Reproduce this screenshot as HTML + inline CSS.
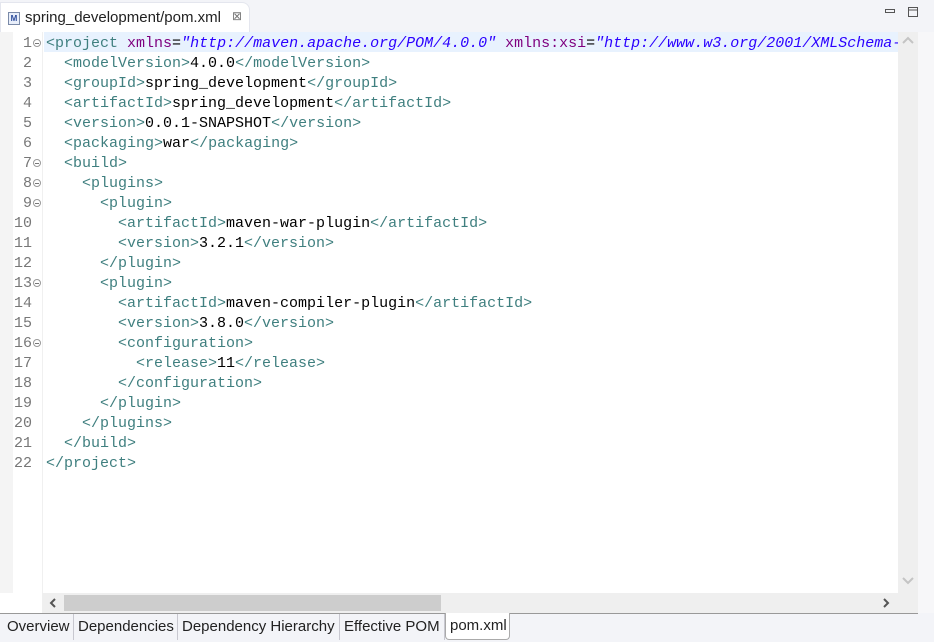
<!DOCTYPE html>
<html><head><meta charset="utf-8"><style>
*{margin:0;padding:0;box-sizing:border-box}
body{width:934px;height:642px;overflow:hidden;background:#f3f4f8;font-family:"Liberation Sans",sans-serif;position:relative}
.tabbar{position:absolute;left:0;top:0;width:934px;height:32px;background:#f3f4f8}
.tab{position:absolute;left:0;top:2px;width:250px;height:30px;background:#fff;border-top-right-radius:8px;border:1px solid #e4e6ee;border-bottom:none}
.tab .t{position:absolute;left:24px;top:6px;font-size:15px;color:#222}
.tab .x{position:absolute;left:231px;top:6px;font-size:12px;color:#777}
.ico{position:absolute;left:7px;top:9px;width:12px;height:13px;border:1px solid #7a8aa8;background:#e8eefa;font-size:8px;font-weight:bold;color:#2a4a9a;text-align:center;line-height:11px}
.editor{position:absolute;left:0;top:32px;width:934px;height:581px;background:#fff}
.lstrip{position:absolute;left:0;top:32px;width:13px;height:561px;background:#f4f4f4}
.ruler{position:absolute;left:42px;top:32px;width:1px;height:561px;background:#f0f0f0}
.hl{position:absolute;left:44px;top:32px;width:854px;height:20px;background:#e8f2fe}
.nums{position:absolute;left:0;top:34px;width:32px;text-align:right;font:15px/20px "Liberation Mono",monospace;color:#777}
.fold{position:absolute;left:33px;width:8px;height:8px;border:1px solid #999;border-radius:50%;font-size:0}
.fold:after{content:"";position:absolute;left:1px;top:2.5px;width:4px;height:1px;background:#777}
.code{position:absolute;left:46px;top:34px;font:15px/20px "Liberation Mono",monospace;white-space:pre;color:#000;width:852px;overflow:hidden}
.t1{color:#3f7f7f}.a{color:#7f007f}.s{color:#2a00ff;font-style:italic}
.vs{position:absolute;left:898px;top:32px;width:20px;height:561px;background:#efefef}
.rg{position:absolute;left:918px;top:32px;width:16px;height:581px;background:#f7f7f9}
.hs{position:absolute;left:42px;top:593px;width:876px;height:20px;background:#efefef}
.thumb{position:absolute;left:64px;top:595px;width:377px;height:16px;background:#cdcdcd}
.bl{position:absolute;left:0;top:613px;width:918px;height:1px;background:#999}
.btabs{position:absolute;left:0;top:614px;height:27px;font-size:15px;color:#222}
.bt{position:absolute;top:0;height:26px;line-height:25px;padding:0 4px;border-right:1px solid #c8c8d0;white-space:nowrap}
</style></head><body>
<div class="tabbar"></div>
<div class="tab"><div class="ico">M</div><span class="t">spring_development/pom.xml</span><span class="x">⊠</span></div>
<svg style="position:absolute;left:884px;top:6px" width="40" height="12"><rect x="1.5" y="3.5" width="9" height="3" fill="none" stroke="#555"/><rect x="24.5" y="1.5" width="9" height="9" fill="none" stroke="#555"/><line x1="24" y1="4" x2="34" y2="4" stroke="#555"/></svg>
<div class="editor"></div>
<div class="lstrip"></div>
<div class="ruler"></div>
<div class="hl"></div>
<div class="nums">1<br>2<br>3<br>4<br>5<br>6<br>7<br>8<br>9<br>10<br>11<br>12<br>13<br>14<br>15<br>16<br>17<br>18<br>19<br>20<br>21<br>22</div>
<div class="fold" style="top:39px"></div><div class="fold" style="top:159px"></div><div class="fold" style="top:179px"></div><div class="fold" style="top:199px"></div><div class="fold" style="top:279px"></div><div class="fold" style="top:339px"></div>
<div class="code"><span class="t1">&lt;project</span> <span class="a">xmlns</span>=<span class="s">"http://maven.apache.org/POM/4.0.0"</span> <span class="a">xmlns:xsi</span>=<span class="s">"http://www.w3.org/2001/XMLSchema-instance"</span>
  <span class="t1">&lt;modelVersion&gt;</span>4.0.0<span class="t1">&lt;/modelVersion&gt;</span>
  <span class="t1">&lt;groupId&gt;</span>spring_development<span class="t1">&lt;/groupId&gt;</span>
  <span class="t1">&lt;artifactId&gt;</span>spring_development<span class="t1">&lt;/artifactId&gt;</span>
  <span class="t1">&lt;version&gt;</span>0.0.1-SNAPSHOT<span class="t1">&lt;/version&gt;</span>
  <span class="t1">&lt;packaging&gt;</span>war<span class="t1">&lt;/packaging&gt;</span>
  <span class="t1">&lt;build&gt;</span>
    <span class="t1">&lt;plugins&gt;</span>
      <span class="t1">&lt;plugin&gt;</span>
        <span class="t1">&lt;artifactId&gt;</span>maven-war-plugin<span class="t1">&lt;/artifactId&gt;</span>
        <span class="t1">&lt;version&gt;</span>3.2.1<span class="t1">&lt;/version&gt;</span>
      <span class="t1">&lt;/plugin&gt;</span>
      <span class="t1">&lt;plugin&gt;</span>
        <span class="t1">&lt;artifactId&gt;</span>maven-compiler-plugin<span class="t1">&lt;/artifactId&gt;</span>
        <span class="t1">&lt;version&gt;</span>3.8.0<span class="t1">&lt;/version&gt;</span>
        <span class="t1">&lt;configuration&gt;</span>
          <span class="t1">&lt;release&gt;</span>11<span class="t1">&lt;/release&gt;</span>
        <span class="t1">&lt;/configuration&gt;</span>
      <span class="t1">&lt;/plugin&gt;</span>
    <span class="t1">&lt;/plugins&gt;</span>
  <span class="t1">&lt;/build&gt;</span>
<span class="t1">&lt;/project&gt;</span></div>
<div class="vs"></div><div class="rg"></div>
<svg style="position:absolute;left:901px;top:36px" width="14" height="10"><path d="M2 7 L7 2 L12 7" fill="none" stroke="#c4c4c4" stroke-width="2"/></svg>
<svg style="position:absolute;left:901px;top:576px" width="14" height="10"><path d="M2 2 L7 7 L12 2" fill="none" stroke="#c4c4c4" stroke-width="2"/></svg>
<div class="hs"></div><div class="thumb"></div>
<svg style="position:absolute;left:48px;top:597px" width="10" height="12"><path d="M7 2 L3 6 L7 10" fill="none" stroke="#555" stroke-width="2"/></svg>
<svg style="position:absolute;left:881px;top:597px" width="10" height="12"><path d="M3 2 L7 6 L3 10" fill="none" stroke="#555" stroke-width="2"/></svg>
<div class="bl"></div>
<div class="btabs">
<div class="bt" style="left:3px;width:71px">Overview</div>
<div class="bt" style="left:74px;width:104px">Dependencies</div>
<div class="bt" style="left:178px;width:162px">Dependency Hierarchy</div>
<div class="bt" style="left:340px;width:105px">Effective POM</div>
<div class="bt" style="left:445px;width:65px;background:#fff;border:1px solid #aaa;border-top:none;border-radius:0 0 4px 4px;top:-1px;height:27px">pom.xml</div>
</div>
</body></html>
